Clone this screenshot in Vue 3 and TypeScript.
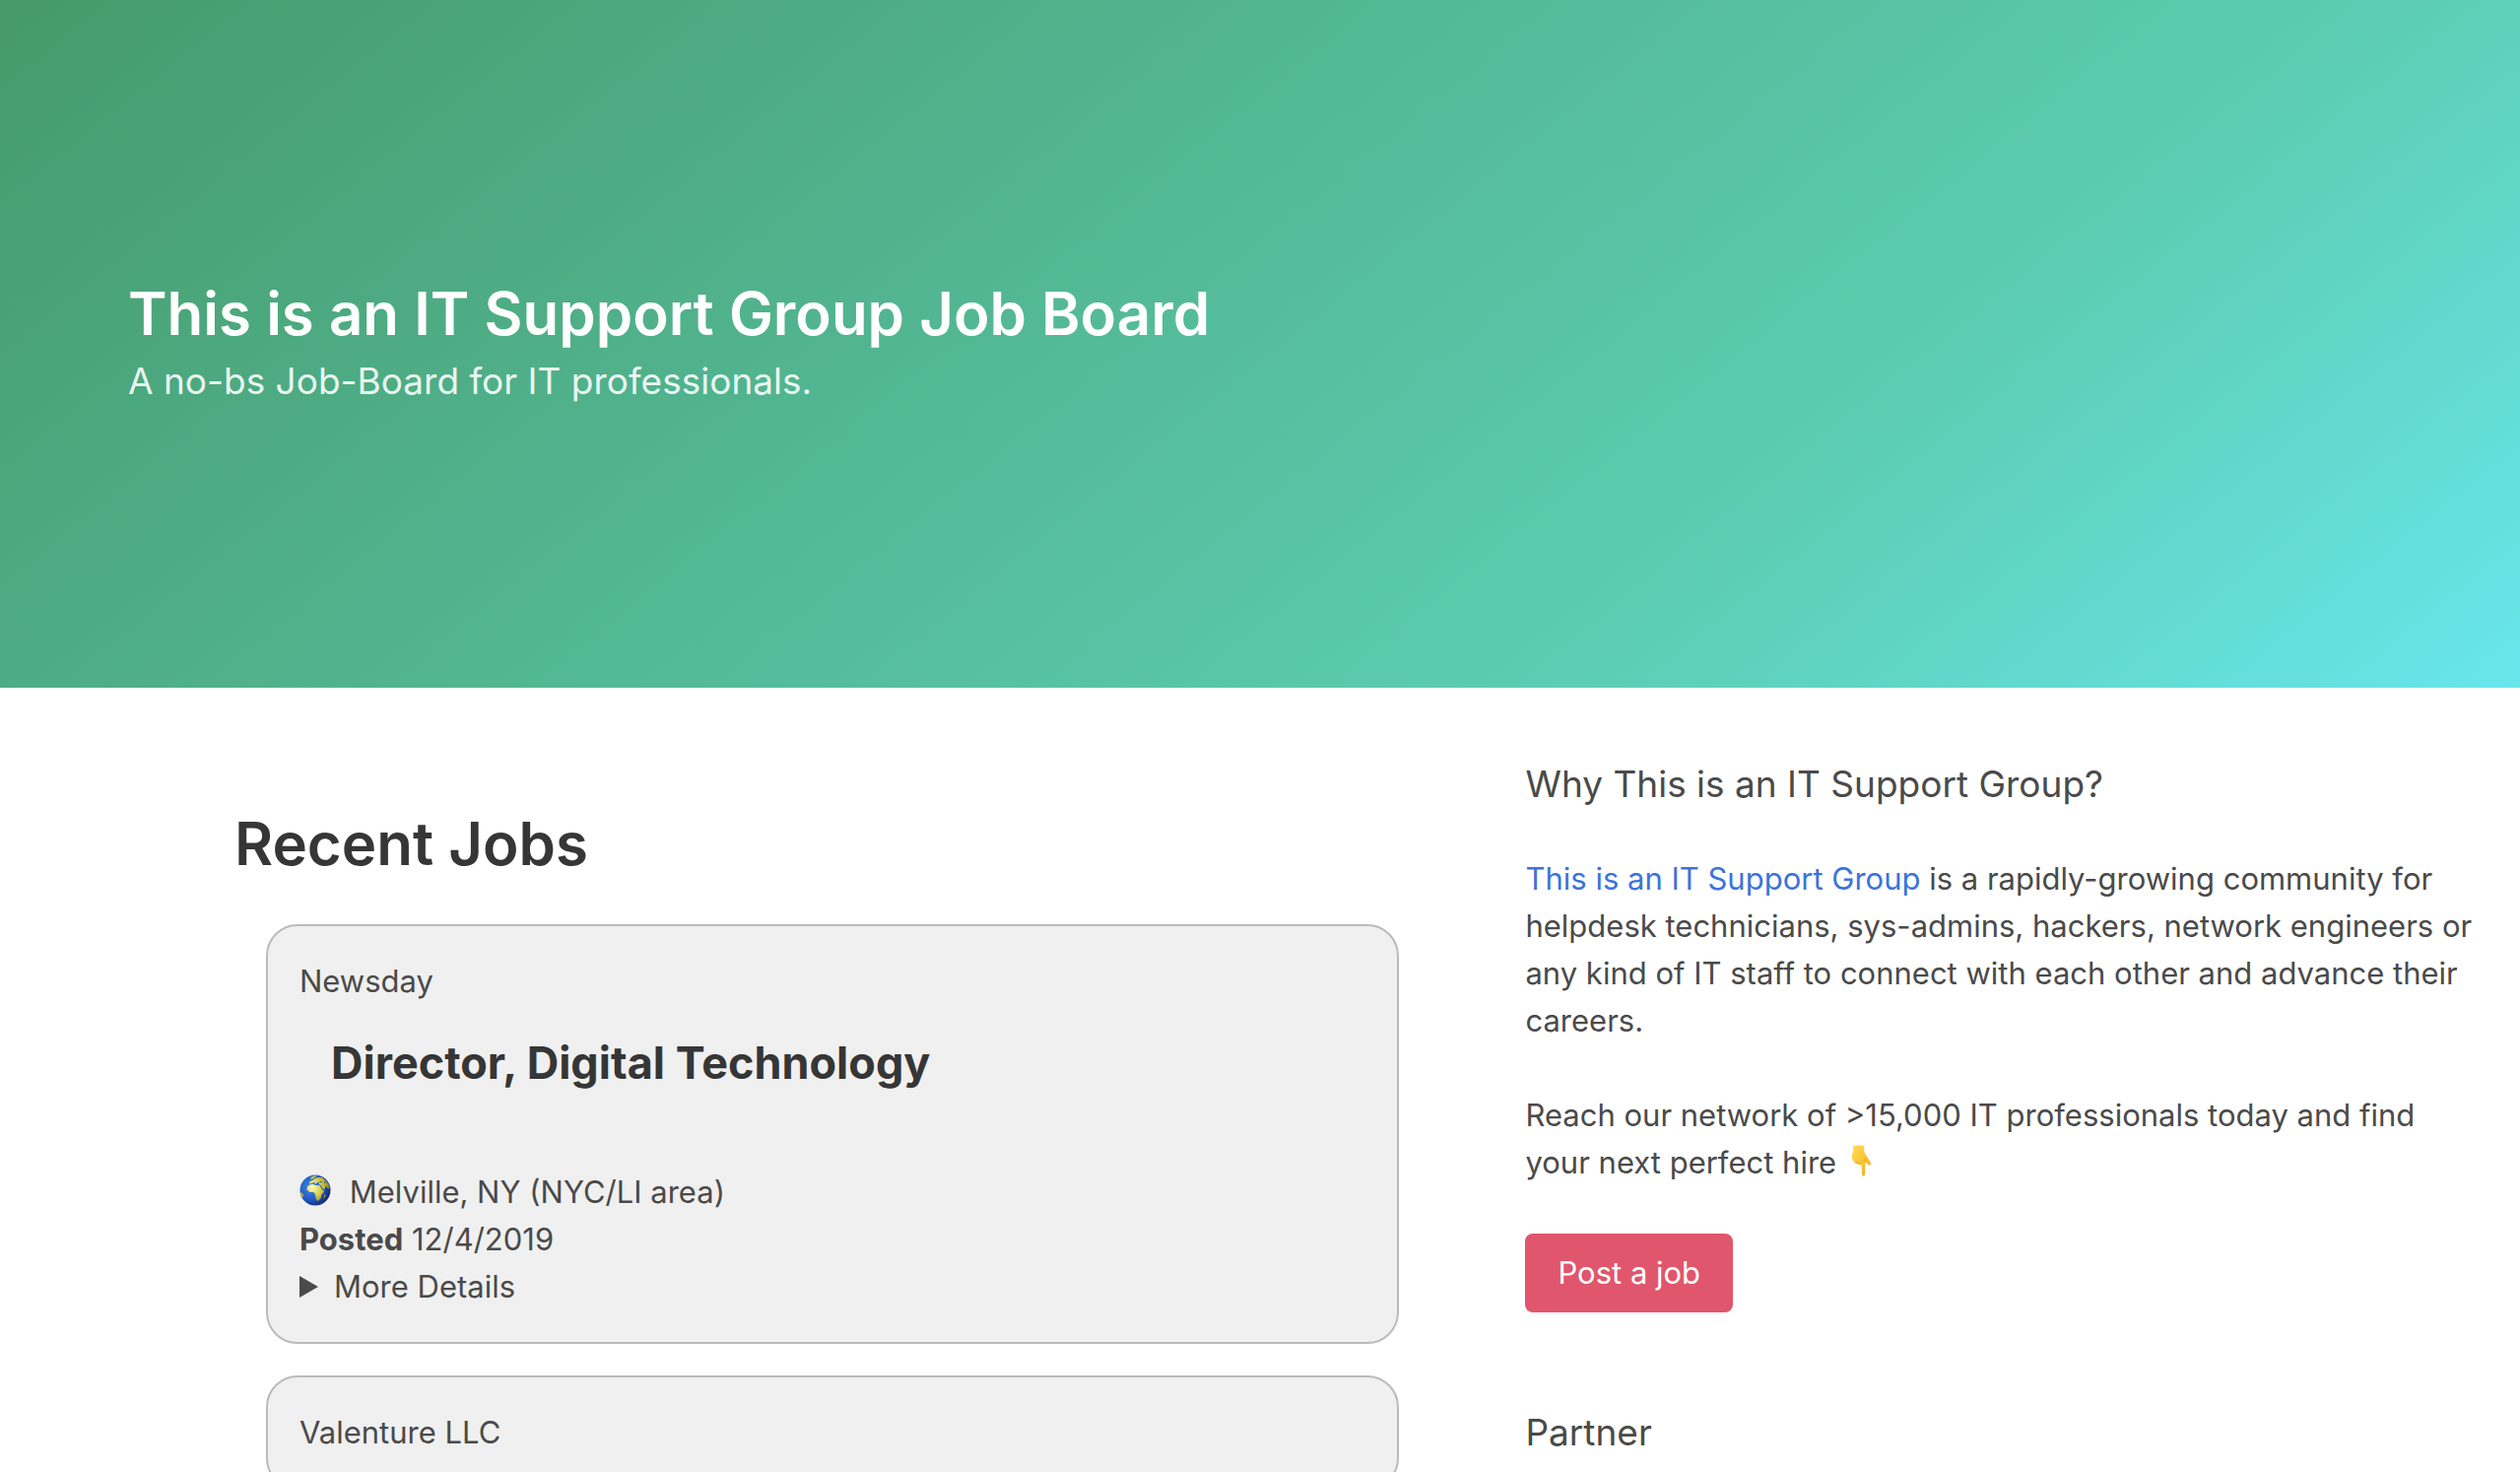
<script setup lang="ts">
interface Job {
  company: string
  title: string
  location: string
  posted: string
}

const jobs: Job[] = [
  {
    company: 'Newsday',
    title: 'Director, Digital Technology',
    location: 'Melville, NY (NYC/LI area)',
    posted: '12/4/2019',
  },
  {
    company: 'Valenture LLC',
    title: '',
    location: '',
    posted: '',
  },
]
</script>

<template>
  <div class="page">
    <header class="hero">
      <h1 class="hero-title">This is an IT Support Group Job Board</h1>
      <p class="hero-subtitle">A no-bs Job-Board for IT professionals.</p>
    </header>

    <div class="columns">
      <main class="jobs">
        <h2 class="jobs-heading">Recent Jobs</h2>
        <article v-for="job in jobs" :key="job.company" class="card">
          <p>{{ job.company }}</p>
          <template v-if="job.title">
            <h3 class="job-title">{{ job.title }}</h3>
            <p class="location">
              <svg class="globe" viewBox="0 0 32 32" aria-hidden="true">
                <defs>
                  <radialGradient id="sea" cx="0.35" cy="0.4" r="0.7">
                    <stop offset="0" stop-color="#3f8be6" />
                    <stop offset="0.6" stop-color="#2156c4" />
                    <stop offset="1" stop-color="#16245f" />
                  </radialGradient>
                  <radialGradient id="land" gradientUnits="userSpaceOnUse" cx="13" cy="13" r="19">
                    <stop offset="0" stop-color="#fdfbb4" />
                    <stop offset="0.5" stop-color="#d5cd4c" />
                    <stop offset="1" stop-color="#7d7c22" />
                  </radialGradient>
                </defs>
                <circle cx="16" cy="16" r="15.5" fill="url(#sea)" />
                <g fill="url(#land)">
                  <path d="M8 12.5 10 10.5 14 9.8 16 11 18.500 11 21 11.500 22.500 15 25 16.500 24 19 22 21 22 23.500 20 26 18 27 16.500 24 16 20.500 14.500 18 10.500 18 7.500 15.500Z" />
                  <path d="M10 9.500 10.500 7 13 6 15 4.500 18 3 23 3 27 6.500 30 11 30.500 15 28 13.500 26.500 11.500 25.500 15 23.500 14.500 22 11 19.500 10 20.500 8.500 17.500 8 17 10 15 8 12 9Z" />
                  <path d="M12 2.500 16 1 18 1.500 14 4 11 5Z" />
                  <path d="M25 21 26.500 20 26 23 24.800 24.500Z" />
                  <path d="M.8 18 3 19 4 21 3 24 1.500 21.500Z" />
                </g>
                <path d="M19.500 7.300 23 7 22 8.500Z M25 7 26 7 26.500 9 25.500 9Z" fill="#245dbd" />
              </svg>
              {{ job.location }}
            </p>
            <p><strong>Posted</strong> {{ job.posted }}</p>
            <details>
              <summary>More Details</summary>
            </details>
          </template>
        </article>
      </main>

      <aside class="sidebar">
        <h2 class="side-heading">Why This is an IT Support Group?</h2>
        <p>
          <a href="#group">This is an IT Support Group</a> is a rapidly-growing community for helpdesk
          technicians, sys-admins, hackers, network engineers or any kind of IT staff to connect with each
          other and advance their careers.
        </p>
        <p>
          Reach our network of &gt;15,000 IT professionals today and find your next perfect hire
          <svg class="hand" viewBox="0 0 32 32" aria-hidden="true">
            <defs>
              <linearGradient id="skin" x1="0" y1="0" x2="1" y2="1">
                <stop offset="0" stop-color="#ffdc57" />
                <stop offset="0.65" stop-color="#fcc02f" />
                <stop offset="1" stop-color="#e09a1e" />
              </linearGradient>
            </defs>
            <path
              d="M7.500 2.500Q7.500 .5 13 .5 19 .5 19.500 2 18.500 5 19.500 7.500L23 13 26 18.500Q26.500 20.500 25 20.500 23.500 20.500 21.500 18L20.500 17.500 20 30Q20 31.500 18.500 31.500 17.200 31.500 17 30L16.500 19.500Q15 20.500 13 19.500 10.500 19.500 9.500 17.500 7 16.500 7 14L7 10 8.500 5Z"
              fill="url(#skin)"
            />
            <path
              d="M10 17.500Q12 19 13.500 17.500M13.500 19Q15.500 19.800 16.500 18M20.500 17.500 20 13"
              fill="none"
              stroke="#dd9420"
              stroke-width="0.8"
            />
          </svg>
        </p>
        <button type="button" class="post">Post a job</button>
        <h2 class="side-heading partner">Partner</h2>
      </aside>
    </div>
  </div>
</template>

<style>
body {
  margin: 0;
  background: #fff;
}
</style>

<style scoped>
.page {
  height: 100vh;
  overflow: hidden;
  color: #4a4a4a;
  font-family: Inter, 'Liberation Sans', sans-serif;
  font-size: 31px;
  line-height: 48px;
}

h1,
h2,
h3,
p {
  margin: 0;
}

.hero {
  padding: 282px 130px 286px;
  color: #fff;
  background: linear-gradient(141deg, #469a6b 0%, #5ccdb2 71%, #68e6ec 100%);
}

.hero-title {
  font-size: 60px;
  font-weight: 600;
  line-height: 72px;
}

.hero-subtitle {
  margin-top: 8px;
  color: rgba(255, 255, 255, 0.9);
  font-size: 37px;
  line-height: 50px;
}

.columns {
  display: grid;
  grid-template-columns: 121fr 96fr;
  column-gap: 96px;
  padding: 72px 46px 0 238px;
}

.jobs-heading {
  margin: 50px 0 46px;
  color: #363636;
  font-size: 60px;
  font-weight: 600;
  line-height: 72px;
}

.card {
  margin: 0 32px 32px;
  padding: 32px;
  border: 2px solid #bbb;
  border-radius: 32px;
  background: #f0f0f0;
}

.job-title {
  padding: 32px 32px 80px;
  color: #363636;
  font-size: 45px;
  font-weight: 700;
  line-height: 54px;
}

.globe {
  width: 32px;
  height: 32px;
  margin-right: 10px;
  vertical-align: -3px;
}

strong {
  font-weight: 700;
}

summary {
  display: flex;
  align-items: center;
  gap: 16px;
  list-style: none;
}

summary::before {
  border-top: 11px solid transparent;
  border-bottom: 11px solid transparent;
  border-left: 19px solid #4a4a4a;
  content: '';
}

.sidebar p {
  margin-bottom: 48px;
}

.side-heading {
  margin-bottom: 46px;
  font-size: 37px;
  font-weight: 400;
  line-height: 52px;
}

a {
  color: #3b74d9;
  text-decoration: none;
}

.hand {
  width: 32px;
  height: 32px;
  vertical-align: -3px;
}

.post {
  height: 80px;
  padding: 0 33px;
  border: 0;
  border-radius: 8px;
  color: #fff;
  background: #e0566c;
  font: inherit;
}

.partner {
  margin-top: 96px;
}
</style>
